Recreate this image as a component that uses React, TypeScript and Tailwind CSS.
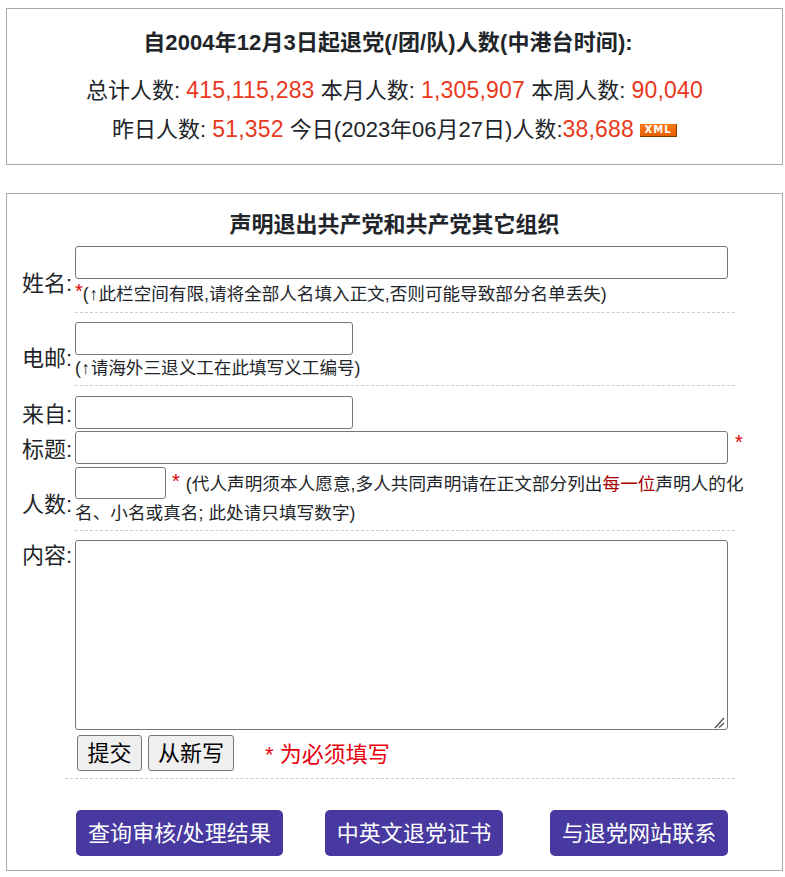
const font = "font-['Liberation_Sans','Noto_Sans_CJK_SC',sans-serif]"

function Num({ children }: { children: React.ReactNode }) {
  return <span className="text-[23px] tracking-[0.2px] text-[#e8391d]">{children}</span>
}

function Star({ className = '' }: { className?: string }) {
  return <span className={`align-[2px] text-[20px] leading-none text-[#e00000] ${className}`}>*</span>
}

function Arrow() {
  return <span className="mx-[0.5px]">↑</span>
}

function Label({ children, className = '' }: { children: React.ReactNode; className?: string }) {
  return <div className={`w-[53px] shrink-0 whitespace-nowrap text-[22px] leading-[26px] text-[#212529] ${className}`}>{children}</div>
}

function Field({ className }: { className: string }) {
  return <input className={`block h-[33px] rounded-[3px] border border-[#767676] bg-white ${className}`} />
}

function LinkButton({ children, className }: { children: React.ReactNode; className: string }) {
  return (
    <a className={`flex h-[46px] items-center justify-center rounded-[5px] bg-[#47399f] text-[22px] tracking-[0.1px] text-white ${className}`}>
      {children}
    </a>
  )
}

export default function App() {
  return (
    <div className={`${font} min-h-[877px] bg-white pl-[6px] pr-[2px] pt-[8px] text-[#212529]`}>
      <div className="flex h-[157px] flex-col items-center border border-[#aaaaaa] pt-[18px]">
        <div className="pr-[13px] text-[22px] font-bold leading-[32px] tracking-[0.1px]">自2004年12月3日起退党(/团/队)人数(中港台时间):</div>
        <div className="mt-[11px] text-[22px] leading-[40px]">
          总计人数: <Num>415,115,283</Num> 本月人数: <Num>1,305,907</Num> 本周人数: <Num>90,040</Num>
        </div>
        <div className="-mt-[2px] flex items-center text-[22px] leading-[40px]">
          <span className="whitespace-pre">昨日人数: <Num>51,352</Num> 今日(2023年06月27日)人数:<Num>38,688</Num></span>
          <span className="ml-[6px] mt-[1px] flex h-[13px] w-[37px] items-center justify-center border-b border-r border-[#7a3c00] bg-gradient-to-b from-[#f67a1a] to-[#e85f00] font-['DejaVu_Sans',sans-serif] text-[10px] font-bold leading-none tracking-[1px] text-white">XML</span>
        </div>
      </div>

      <div className="mt-[28px] h-[678px] border border-[#aaaaaa] pl-[15px]">
        <div className="mt-[15px] pr-[15px] text-center text-[22px] font-bold leading-[32px]">声明退出共产党和共产党其它组织</div>

        <div className="mt-[5px] flex items-center">
          <Label className="pt-[8px]">姓名:</Label>
          <div className="w-[660px] border-b border-dashed border-[#cccccc] pb-[4px]">
            <Field className="w-[653px]" />
            <div className="mt-[2px] whitespace-nowrap text-[17.6px] leading-[27px]"><Star />(<Arrow />此栏空间有限,请将全部人名填入正文,否则可能导致部分名单丢失)</div>
          </div>
        </div>

        <div className="mt-[9px] flex items-center">
          <Label className="pt-[10px]">电邮:</Label>
          <div className="w-[660px] border-b border-dashed border-[#cccccc] pb-[3px]">
            <Field className="w-[278px]" />
            <div className="whitespace-nowrap text-[17.6px] leading-[27px]">(<Arrow />请海外三退义工在此填写义工编号)</div>
          </div>
        </div>

        <div className="mt-[10px] flex items-center">
          <Label className="pt-[4px]">来自:</Label>
          <Field className="w-[278px]" />
        </div>

        <div className="mt-[2px] flex items-center">
          <Label className="pt-[4px]">标题:</Label>
          <Field className="w-[653px]" />
          <span className="-mt-[5px] ml-[7px]"><Star /></span>
        </div>

        <div className="mt-[3px] flex items-center">
          <Label className="pt-[12px]">人数:</Label>
          <div className="w-[660px] border-b border-dashed border-[#cccccc] pb-[2px]">
            <div className="w-[670px] whitespace-nowrap text-[17.6px] leading-[29px] tracking-[0.05px]">
              <input className="mr-[6px] inline-block h-[32px] w-[91px] rounded-[3px] border border-[#767676] align-bottom" />
              <Star className="mr-[6px]" />(代人声明须本人愿意,多人共同声明请在正文部分列出<span className="text-[#a80000]">每一位</span>声明人的化
            </div>
            <div className="whitespace-nowrap text-[17.6px] leading-[29px] tracking-[0.05px]">名、小名或真名; 此处请只填写数字)</div>
          </div>
        </div>

        <div className="mt-[9px] flex items-start">
          <Label className="pt-[3px]">内容:</Label>
          <div className="relative">
            <textarea className="block h-[190px] w-[653px] resize-none rounded-[3px] border border-[#767676]" />
            <svg className="absolute bottom-[1px] right-[2px]" width="12" height="12" viewBox="0 0 12 12" fill="none" stroke="#555555" strokeWidth="1.4">
              <path d="M1 11 L10 1" />
              <path d="M5 10.5 L10 6" />
            </svg>
          </div>
        </div>

        <div className="ml-[55px] mt-[5px] flex items-center">
          <button className="h-[36px] w-[65px] rounded-[3px] border border-[#767676] bg-[#efefef] pt-[1px] text-[22px] text-black">提交</button>
          <button className="ml-[6px] h-[36px] w-[86px] rounded-[3px] border border-[#767676] bg-[#efefef] pt-[1px] text-[22px] text-black">从新写</button>
          <span className="ml-[31px] pt-[3px] text-[22px] text-[#e8000f]">* 为必须填写</span>
        </div>

        <div className="ml-[43px] mt-[7px] w-[670px] border-b border-dashed border-[#cccccc]" />

        <div className="ml-[54px] mt-[31px] flex">
          <LinkButton className="w-[207px]">查询审核/处理结果</LinkButton>
          <LinkButton className="ml-[42px] w-[178px]">中英文退党证书</LinkButton>
          <LinkButton className="ml-[47px] w-[178px]">与退党网站联系</LinkButton>
        </div>
      </div>
    </div>
  )
}
